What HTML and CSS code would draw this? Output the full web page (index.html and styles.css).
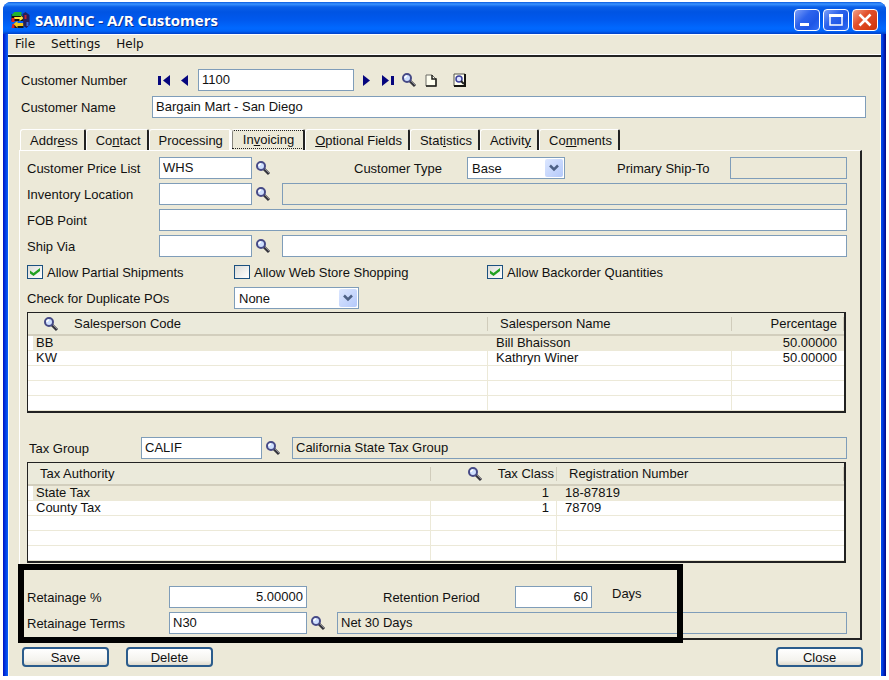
FILE: index.html
```html
<!DOCTYPE html>
<html lang="en">
<head>
    <meta charset="UTF-8">
    <meta name="viewport" content="width=device-width, initial-scale=1.0">
    <title>SAMINC - A/R Customers</title>
    <link rel="stylesheet" href="styles.css">
</head>
<body>
    <!-- Shared icons -->
    <svg class="sprite" aria-hidden="true">
        <symbol id="finder" viewBox="0 0 16 16">
            <path d="M9 9l5 5" stroke="#34343c" stroke-width="3"/>
            <path d="M9 8l5 5" stroke="#8a8a94" stroke-width="1"/>
            <circle cx="6" cy="6" r="4" fill="#cfe0ff" stroke="#464a86" stroke-width="2"/>
            <path d="M4 6a2 2 0 0 1 2-2" fill="none" stroke="#fff" stroke-width="1.5"/>
        </symbol>
        <symbol id="chevron" viewBox="0 0 10 8">
            <path d="M1 1.500l4 4 4-4" fill="none" stroke="#4d6185" stroke-width="2.500"/>
        </symbol>
    </svg>

    <div class="window">
        <!-- Title bar -->
        <header class="titlebar">
            <svg class="app-icon" viewBox="0 0 20 18" aria-hidden="true">
                <path d="M1 3h10v2h3v5H1z" fill="#111"/>
                <path d="M1 4l3-3h7v4H2z" fill="#22b430"/>
                <path d="M4 6h7l-2-2 5 3-5 3V8H3z" fill="#ffe33a"/>
                <path d="M1 7h3v4H1zM2 13h3v4H1z" fill="#e02020"/>
                <path d="M4 12h9v5H4z" fill="#171717"/>
                <path d="M3 13l4-3v2h6v3H7v2z" fill="#f2c81e"/>
                <path d="M12 3l3-2 4 3v10l-3 3-3-2z" fill="#25205c"/>
                <path d="M14 4h2v4h-2z" fill="#c72230"/>
                <path d="M16 11h2v4h-2z" fill="#3d6de0"/>
            </svg>
            <h1>SAMINC - A/R Customers</h1>
            <div class="window-buttons">
                <button type="button" class="window-button" aria-label="Minimize">
                    <svg viewBox="0 0 22 20"><path d="M4 14.500h9" stroke="#fff" stroke-width="3"/></svg>
                </button>
                <button type="button" class="window-button" aria-label="Maximize">
                    <svg viewBox="0 0 22 20"><path d="M5 5h12v10H5z" fill="none" stroke="#fff" stroke-width="1.500"/><path d="M4 5.500h14" stroke="#fff" stroke-width="3"/></svg>
                </button>
                <button type="button" class="window-button close" aria-label="Close window">
                    <svg viewBox="0 0 22 20"><path d="M5.500 4.500l11 11M16.500 4.500l-11 11" stroke="#fff" stroke-width="2.500"/></svg>
                </button>
            </div>
        </header>

        <nav class="menubar">
            <a href="#">File</a>
            <a href="#">Settings</a>
            <a href="#">Help</a>
        </nav>

        <main>
            <!-- Customer -->
            <div class="customer">
                <div class="row">
                    <label class="head-label" for="number">Customer Number</label>
                    <div class="navigator">
                        <button type="button" class="icon" aria-label="First"><svg viewBox="0 0 16 16"><path d="M2 4h3v9H2zM14 3v11L7 8.500z" fill="#06067e"/></svg></button>
                        <button type="button" class="icon" aria-label="Previous"><svg viewBox="0 0 16 16"><path d="M11 3v11L4 8.500z" fill="#06067e"/></svg></button>
                        <input type="text" id="number" class="number" value="1100">
                        <button type="button" class="icon" aria-label="Next"><svg viewBox="0 0 16 16"><path d="M4 3v11l7-5.500z" fill="#06067e"/></svg></button>
                        <button type="button" class="icon" aria-label="Last"><svg viewBox="0 0 16 16"><path d="M2 3v11l7-5.500zM11 4h3v9h-3z" fill="#06067e"/></svg></button>
                        <button type="button" class="icon" aria-label="Find customer"><svg viewBox="0 0 16 16"><use href="#finder"/></svg></button>
                        <button type="button" class="icon" aria-label="New"><svg viewBox="0 0 16 16"><path d="M4 3h6l4 4v7H4z" fill="#fffff0" stroke="#6c6c66"/><path d="M10 3v4h4v7H4" fill="none" stroke="#20201c" stroke-width="1.500"/></svg></button>
                        <button type="button" class="icon last" aria-label="Customer inquiry"><svg viewBox="0 0 16 16"><path d="M3 2h11v12H3z" fill="#fffff0" stroke="#55554f"/><path d="M14 2v12H3" fill="none" stroke="#15150f" stroke-width="2"/><circle cx="8" cy="7" r="3" fill="#dfe6ff" stroke="#3b3f9a" stroke-width="1.500"/><path d="M10 9l3 3" stroke="#222" stroke-width="2"/></svg></button>
                    </div>
                </div>
                <div class="row">
                    <label class="head-label" for="name">Customer Name</label>
                    <input type="text" id="name" class="grow" value="Bargain Mart - San Diego">
                </div>
            </div>

            <!-- Tabs -->
            <div class="tabs" role="tablist">
                <button type="button" class="tab" role="tab">Addr<u>e</u>ss</button>
                <button type="button" class="tab" role="tab">Co<u>n</u>tact</button>
                <button type="button" class="tab before-active" role="tab">Processin<u>g</u></button>
                <button type="button" class="tab active" role="tab" aria-selected="true">In<u>v</u>oicing</button>
                <button type="button" class="tab" role="tab"><u>O</u>ptional Fields</button>
                <button type="button" class="tab" role="tab">Stat<u>i</u>stics</button>
                <button type="button" class="tab" role="tab">Activit<u>y</u></button>
                <button type="button" class="tab" role="tab">Co<u>m</u>ments</button>
            </div>

            <section class="panel" role="tabpanel">
                <div class="rows">
                    <div class="row">
                        <label class="field-label" for="price-list">Customer Price List</label>
                        <input type="text" id="price-list" class="code" value="WHS">
                        <button type="button" class="icon" aria-label="Find price list"><svg viewBox="0 0 16 16"><use href="#finder"/></svg></button>
                        <div class="type-group">
                            <label for="type">Customer Type</label>
                            <span class="select type-select">
                                <select id="type"><option>Base</option></select>
                                <svg viewBox="0 0 10 8"><use href="#chevron"/></svg>
                            </span>
                        </div>
                        <div class="ship-group">
                            <label for="ship-to">Primary Ship-To</label>
                            <input type="text" id="ship-to" class="grow" readonly>
                        </div>
                    </div>
                    <div class="row">
                        <label class="field-label" for="location">Inventory Location</label>
                        <input type="text" id="location" class="code">
                        <button type="button" class="icon" aria-label="Find location"><svg viewBox="0 0 16 16"><use href="#finder"/></svg></button>
                        <input type="text" class="description" aria-label="Location description" readonly>
                    </div>
                    <div class="row">
                        <label class="field-label" for="fob">FOB Point</label>
                        <input type="text" id="fob" class="grow">
                    </div>
                    <div class="row">
                        <label class="field-label" for="ship-via">Ship Via</label>
                        <input type="text" id="ship-via" class="code">
                        <button type="button" class="icon" aria-label="Find ship via"><svg viewBox="0 0 16 16"><use href="#finder"/></svg></button>
                        <input type="text" class="description" aria-label="Ship via description">
                    </div>
                    <div class="row checks">
                        <label><input type="checkbox" checked>Allow Partial Shipments</label>
                        <label><input type="checkbox">Allow Web Store Shopping</label>
                        <label><input type="checkbox" checked>Allow Backorder Quantities</label>
                    </div>
                    <div class="row">
                        <label class="duplicate-label" for="duplicate">Check for Duplicate POs</label>
                        <span class="select duplicate-select">
                            <select id="duplicate"><option>None</option></select>
                            <svg viewBox="0 0 10 8"><use href="#chevron"/></svg>
                        </span>
                    </div>
                </div>

                <!-- Salespersons -->
                <table class="grid">
                    <colgroup><col><col class="sales-name"><col class="sales-percent"></colgroup>
                    <thead>
                        <tr>
                            <th><div class="head-cell wide"><svg class="head-icon" viewBox="0 0 16 16"><use href="#finder"/></svg>Salesperson Code</div></th>
                            <th>Salesperson Name</th>
                            <th class="num">Percentage</th>
                        </tr>
                    </thead>
                    <tbody>
                        <tr class="selected"><td>BB</td><td>Bill Bhaisson</td><td class="num">50.00000</td></tr>
                        <tr><td>KW</td><td>Kathryn Winer</td><td class="num">50.00000</td></tr>
                        <tr><td></td><td></td><td></td></tr>
                        <tr><td></td><td></td><td></td></tr>
                        <tr><td></td><td></td><td></td></tr>
                    </tbody>
                </table>

                <div class="row tax-group">
                    <label class="tax-label" for="tax-group">Tax Group</label>
                    <input type="text" id="tax-group" class="tax-code" value="CALIF">
                    <button type="button" class="icon" aria-label="Find tax group"><svg viewBox="0 0 16 16"><use href="#finder"/></svg></button>
                    <input type="text" class="description" aria-label="Tax group description" value="California State Tax Group" readonly>
                </div>

                <!-- Tax authorities -->
                <table class="grid">
                    <colgroup><col><col class="tax-class"><col class="tax-registration"></colgroup>
                    <thead>
                        <tr>
                            <th>Tax Authority</th>
                            <th class="class-head"><div class="head-cell"><svg class="head-icon" viewBox="0 0 16 16"><use href="#finder"/></svg>Tax Class</div></th>
                            <th>Registration Number</th>
                        </tr>
                    </thead>
                    <tbody>
                        <tr class="selected"><td>State Tax</td><td class="num">1</td><td>18-87819</td></tr>
                        <tr><td>County Tax</td><td class="num">1</td><td>78709</td></tr>
                        <tr><td></td><td></td><td></td></tr>
                        <tr><td></td><td></td><td></td></tr>
                        <tr><td></td><td></td><td></td></tr>
                    </tbody>
                </table>

                <!-- Retainage -->
                <div class="retainage rows">
                    <div class="row">
                        <label class="retainage-label" for="retainage">Retainage %</label>
                        <input type="text" id="retainage" class="retainage-input num" value="5.00000">
                        <label class="period-label" for="period">Retention Period</label>
                        <input type="text" id="period" class="period num" value="60">
                        <span class="days">Days</span>
                    </div>
                    <div class="row">
                        <label class="retainage-label" for="terms">Retainage Terms</label>
                        <input type="text" id="terms" class="retainage-input" value="N30">
                        <button type="button" class="icon" aria-label="Find terms"><svg viewBox="0 0 16 16"><use href="#finder"/></svg></button>
                        <input type="text" class="description" aria-label="Terms description" value="Net 30 Days" readonly>
                    </div>
                    <div class="highlight"></div>
                </div>
            </section>

            <footer class="actions">
                <button type="button" class="action">Save</button>
                <button type="button" class="action">Delete</button>
                <button type="button" class="action close-action">Close</button>
            </footer>
        </main>
    </div>
</body>
</html>
```

FILE: styles.css
```css
* {
    box-sizing: border-box;
}

body {
    margin: 2px 3px 4px;
    background-color: #ffffff;
    color: #111111;
    font: 13px/15px "Liberation Sans", Arial, sans-serif;
}

button,
input,
select {
    font: inherit;
    color: inherit;
}

button {
    padding: 0;
    border: 0;
    background: none;
}

.sprite {
    display: block;
    width: 0;
    height: 0;
}

.window {
    padding: 0 5px;
    background: linear-gradient(to right, #0014c0 0, #0034e0 2px, #0c62f4 5px, #0050ee 50%, #0046e8 calc(100% - 4px), #0020c0 calc(100% - 2px), #000c80 100%);
    border-radius: 8px 8px 0 0;
}

/* Title bar */
.titlebar {
    display: flex;
    align-items: center;
    height: 32px;
    margin: 0 -5px;
    padding: 3px 8px 0 7px;
    border-radius: 8px 8px 0 0;
    background: linear-gradient(#0a5be0 0, #3a93ff 2px, #0a5fe8 5px, #0054e3 10px, #0059ee 18px, #0068ff 26px, #0064fa 29px, #0040c8 32px);
}

.app-icon {
    width: 21px;
    height: 18px;
}

h1 {
    margin: 0 0 0 4px;
    color: #ffffff;
    font: bold 15px/20px "Open Sans", sans-serif;
    text-shadow: 1px 1px #0b2f91;
}

.window-buttons {
    display: flex;
    gap: 3px;
    margin-left: auto;
}

.window-button {
    width: 26px;
    height: 22px;
    border: 1px solid #ffffff;
    border-radius: 4px;
    background: linear-gradient(135deg, #7d9ff8, #2d63ec 40%, #1e56e6 70%, #3370f6);
}

.window-button.close {
    background: linear-gradient(135deg, #f0a088, #e2502c 40%, #d63c12 80%, #c83208);
}

.window-button svg {
    display: block;
    width: 22px;
    height: 20px;
    margin: auto;
}

.menubar {
    display: flex;
    gap: 16px;
    height: 23px;
    padding: 2px 7px 0;
    border-top: 1px solid #ffffff;
    border-bottom: 2px solid #222222;
    background-color: #ece9d8;
    box-shadow: inset 0 -1px #ffffff;
}

.menubar a {
    color: #111111;
    font: 12px/15px "DejaVu Sans", sans-serif;
    text-decoration: none;
}

main {
    padding: 12px 14px 9px 10px;
    border-left: 1px solid #fffdf0;
    border-right: 1px solid #fffdf0;
    background-color: #ece9d8;
}

/* Fields */
.row {
    display: flex;
    align-items: center;
    height: 22px;
}

.rows {
    display: grid;
    grid-template-columns: minmax(0, 1fr);
    gap: 4px;
}

label {
    flex: none;
    white-space: nowrap;
}

input[type="text"] {
    flex: none;
    min-width: 0;
    height: 22px;
    padding: 0 3px 2px;
    border: 1px solid #7f9db9;
    border-radius: 0;
    background-color: #ffffff;
    outline: none;
}

input[type="text"]:read-only {
    background-color: #ece9d8;
}

input.grow,
input.description {
    flex: 1;
    width: 0;
}

.num,
input.num {
    text-align: right;
}

.icon {
    flex: none;
    width: 16px;
    height: 16px;
}

.icon svg {
    display: block;
    width: 16px;
    height: 16px;
}

.row > .icon {
    margin-left: 3px;
}

.description {
    margin-left: 11px;
}

.customer {
    display: grid;
    gap: 5px;
    padding-left: 2px;
}

.head-label {
    width: 131px;
}

.navigator {
    display: flex;
    align-items: center;
    gap: 5px;
    padding-left: 4px;
}

.navigator .number {
    width: 156px;
}

.navigator .last {
    margin-left: 8px;
}

/* Tabs */
.tabs {
    display: flex;
    height: 21px;
    margin-top: 11px;
    padding-left: 1px;
}

.tab {
    padding: 1px 6px 0 9px;
    border-top: 1px solid #ffffff;
    border-left: 1px solid #ffffff;
    border-right: 2px solid #222222;
    border-radius: 3px 2px 0 0;
    white-space: nowrap;
}

.tab.before-active {
    border-right-color: #ffffff;
}

.tab.active {
    padding: 0 9px 2px 11px;
    outline: 1px dotted #222222;
    outline-offset: -2px;
}

.panel {
    margin-right: 4px;
    padding: 6px 13px 4px 7px;
    border: 1px solid #ffffff;
    border-right: 2px solid #222222;
    border-bottom: 2px solid #222222;
}

.field-label {
    width: 132px;
}

.code {
    width: 93px;
}

.type-group {
    display: flex;
    flex: none;
    align-items: center;
    margin-left: 83px;
}

.type-group label {
    width: 113px;
}

.ship-group {
    display: flex;
    flex: 1;
    align-items: center;
    margin-left: 52px;
}

.ship-group label {
    width: 113px;
}

/* Drop-downs */
.select {
    position: relative;
    height: 22px;
}

.select select {
    width: 100%;
    height: 22px;
    padding: 0 4px;
    border: 1px solid #7f9db9;
    border-radius: 0;
    background-color: #ffffff;
    appearance: none;
}

.select svg {
    position: absolute;
    top: 2px;
    right: 2px;
    width: 18px;
    height: 18px;
    padding: 4px;
    border-radius: 2px;
    background: linear-gradient(135deg, #dce7ff, #b4c9fa);
    pointer-events: none;
}

.type-select {
    width: 98px;
}

.duplicate-select {
    width: 125px;
}

.duplicate-label {
    width: 207px;
}

/* Check boxes */
.checks label {
    display: flex;
    align-items: center;
    gap: 4px;
}

.checks label:nth-child(1) {
    width: 207px;
}

.checks label:nth-child(2) {
    width: 253px;
}

.checks input {
    display: grid;
    place-items: center;
    width: 16px;
    height: 14px;
    margin: 0;
    border: 1px solid #1c5180;
    background: linear-gradient(135deg, #dcdcd7, #ffffff);
    appearance: none;
}

.checks input:checked::before {
    content: "";
    width: 10px;
    height: 8px;
    background-color: #21a121;
    clip-path: polygon(0 30%, 35% 62%, 100% 0, 100% 38%, 35% 100%, 0 68%);
}

/* Grids */
.grid {
    width: calc(100% - 1px);
    margin-top: 3px;
    border: 1px solid #222222;
    border-right-width: 2px;
    border-bottom-width: 2px;
    border-spacing: 0;
    background-color: #ffffff;
    table-layout: fixed;
}

.grid th {
    height: 23px;
    padding: 0 7px 0 12px;
    border-bottom: 2px solid #d2cebd;
    background: linear-gradient(#d0ccbb, #d0ccbb) right center / 1px 14px no-repeat #ebeadb;
    font-weight: normal;
    text-align: left;
    white-space: nowrap;
}

.grid th.num {
    text-align: right;
}

.grid th.class-head {
    padding-right: 3px;
}

.grid td {
    height: 15px;
    padding: 0 7px 0 8px;
    border-right: 1px solid #ece9d8;
    border-bottom: 1px solid #ece9d8;
    line-height: 14px;
}

.grid td:last-child {
    border-right: 0;
}

.grid .selected td {
    background-color: #ece9d8;
}

.grid .selected td:first-child {
    box-shadow: inset 5px 0 #ffffff;
}

.head-cell {
    display: flex;
    align-items: center;
    justify-content: flex-end;
    gap: 15px;
}

.head-cell.wide {
    justify-content: flex-start;
    padding-left: 3px;
}

.head-icon {
    width: 16px;
    height: 16px;
}

.sales-name {
    width: 244px;
}

.sales-percent {
    width: 112px;
}

.tax-class {
    width: 126px;
}

.tax-registration {
    width: 287px;
}

.tax-group {
    margin-top: 24px;
}

.tax-label {
    width: 114px;
    padding-left: 2px;
}

.tax-code {
    width: 121px;
}

/* Retainage */
.retainage {
    position: relative;
    margin-top: 23px;
}

.retainage-label {
    width: 142px;
}

.retainage-input {
    width: 138px;
}

.period-label {
    width: 132px;
    margin-left: 76px;
}

.period {
    width: 77px;
}

.days {
    align-self: flex-start;
    margin-left: 20px;
}

/* Marker box drawn over the retainage fields */
.highlight {
    position: absolute;
    top: -22px;
    bottom: -9px;
    left: -9px;
    width: 665px;
    border: 6px solid #000000;
    pointer-events: none;
}

/* Buttons */
.actions {
    display: flex;
    gap: 17px;
    margin-top: 7px;
    padding: 0 3px;
}

.action {
    width: 87px;
    height: 20px;
    border: 2px solid #2b5c8c;
    border-radius: 4px;
    background: linear-gradient(#ffffff, #f4f3ee 70%, #dfdbce);
    line-height: 15px;
}

.close-action {
    margin-left: auto;
}
```
